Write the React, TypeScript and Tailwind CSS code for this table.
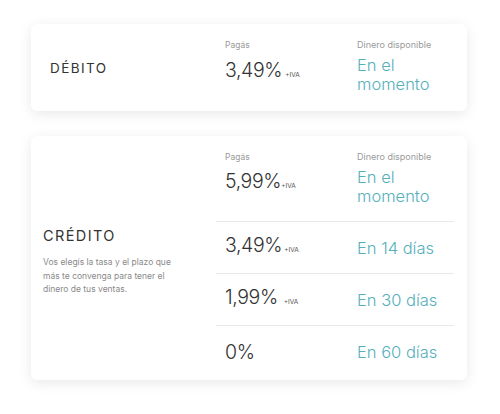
import React from "react";

const teal = "text-[#55b0bb]";

function Val({ v, iva, gap }: { v: string; iva?: boolean; gap?: string }) {
  return (
    <div className="flex items-baseline text-[19.5px] font-light leading-[24px] text-[#333] tracking-[-0.4px]">
      <span>{v}</span>
      {iva && <span className={`text-[6.5px] font-normal text-[#555] tracking-normal ${gap ?? ""}`}>+IVA</span>}
    </div>
  );
}

export default function App() {
  return (
    <div
      className="w-[500px] h-[414px] bg-white pt-[24px] px-[31px] flex flex-col gap-[25px]"
      style={{ fontFamily: "Inter, 'Open Sans', sans-serif" }}
    >
      {/* Débito */}
      <div className="h-[87px] w-[436px] rounded-[6px] bg-white shadow-[0_3px_14px_rgba(0,0,0,0.09)] flex">
        <div className="flex-1 flex items-center pl-[19px] pt-[2px]">
          <span className="text-[13.5px] tracking-[1.4px] text-[#333]">DÉBITO</span>
        </div>
        <div className="w-[238px] mr-[13px] flex pl-[9px] pt-[15px]">
          <div className="w-[132px]">
            <div className="text-[8.5px] leading-[12px] text-[#9a9a9a]">Pagás</div>
            <div className="mt-[7px]">
              <Val v="3,49%" iva gap="ml-[3px]" />
            </div>
          </div>
          <div>
            <div className="text-[9px] leading-[12px] text-[#9a9a9a]">Dinero disponible</div>
            <div className={`mt-[5px] text-[16.5px] font-light leading-[19px] ${teal}`}>
              En el
              <br />
              momento
            </div>
          </div>
        </div>
      </div>

      {/* Crédito */}
      <div className="h-[244px] w-[436px] rounded-[6px] bg-white shadow-[0_3px_14px_rgba(0,0,0,0.09)] flex">
        <div className="flex-1 flex flex-col justify-center pl-[12px] pt-[6px]">
          <div className="text-[14.5px] tracking-[1.4px] text-[#333]">CRÉDITO</div>
          <div className="mt-[9px] text-[8.5px] leading-[13.5px] text-[#8a8a8a] w-[140px]">
            Vos elegís la tasa y el plazo que más te convenga para tener el dinero de tus ventas.
          </div>
        </div>
        <div className="w-[238px] mr-[13px] flex flex-col">
          <div className="h-[86px] flex pl-[9px] pt-[15px] border-b border-[#e8e8e8]">
            <div className="w-[132px]">
              <div className="text-[8.5px] leading-[12px] text-[#9a9a9a]">Pagás</div>
              <div className="mt-[6px]">
                <Val v="5,99%" iva />
              </div>
            </div>
            <div>
              <div className="text-[9px] leading-[12px] text-[#9a9a9a]">Dinero disponible</div>
              <div className={`mt-[5px] text-[16.5px] font-light leading-[19px] ${teal}`}>
                En el
                <br />
                momento
              </div>
            </div>
          </div>
          {[
            { v: "3,49%", gap: "ml-[2px]", d: "En 14 días" },
            { v: "1,99%", gap: "ml-[6px]", d: "En 30 días" },
            { v: "0%", d: "En 60 días", noIva: true },
          ].map((r, i) => (
            <div
              key={i}
              className={`h-[52px] flex items-center pl-[9px] ${i < 2 ? "border-b border-[#e8e8e8]" : ""}`}
            >
              <div className="w-[132px]">
                <Val v={r.v} iva={!r.noIva} gap={r.gap} />
              </div>
              <div className={`text-[16.5px] font-light leading-[20px] ${teal}`}>{r.d}</div>
            </div>
          ))}
        </div>
      </div>
    </div>
  );
}
